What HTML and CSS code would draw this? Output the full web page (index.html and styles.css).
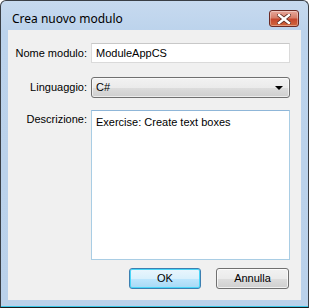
FILE: index.html
```html
<!DOCTYPE html>
<html lang="it">
<head>
    <meta charset="UTF-8">
    <title>Crea nuovo modulo</title>
    <link rel="stylesheet" href="styles.css">
</head>
<body>
    <div class="window">
        <!-- Title bar -->
        <div class="titlebar">
            <span class="title">Crea nuovo modulo</span>
            <div class="close-btn">
                <svg width="14" height="10" viewBox="0 0 14 10">
                    <path d="M2 1 L12 9 M12 1 L2 9" stroke="#5a2a20" stroke-width="4" stroke-linecap="square"/>
                    <path d="M2 1 L12 9 M12 1 L2 9" stroke="#ffffff" stroke-width="2.4" stroke-linecap="square"/>
                </svg>
            </div>
        </div>

        <!-- Dialog body -->
        <div class="client">
            <div class="row">
                <label class="label">Nome modulo:</label>
                <div class="textbox">ModuleAppCS</div>
            </div>
            <div class="row combo-row">
                <label class="label">Linguaggio:</label>
                <div class="combo">
                    <span>C#</span>
                    <span class="arrow"></span>
                </div>
            </div>
            <div class="row desc-row">
                <label class="label">Descrizione:</label>
                <div class="textarea">Exercise: Create text boxes</div>
            </div>
            <div class="buttons">
                <div class="btn btn-default">OK</div>
                <div class="btn">Annulla</div>
            </div>
        </div>
    </div>
</body>
</html>
```

FILE: styles.css
```css
* {
    margin: 0;
    padding: 0;
    box-sizing: border-box;
}

body {
    width: 309px;
    height: 308px;
    font-family: 'Liberation Sans', Arial, sans-serif;
    font-size: 11px;
    color: #000;
    background: #fff;
    overflow: hidden;
}

.window {
    width: 309px;
    height: 308px;
    border: 1px solid #3a3f46;
    border-bottom-color: #1a1a1a;
    border-radius: 6px 6px 0 0;
    background: linear-gradient(to bottom, #c7daef 0, #bcd3ec 30px, #bad1ea 100%);
    box-shadow: inset 0 -1px 0 #3ac6e6;
    display: flex;
    flex-direction: column;
}

.titlebar {
    height: 29px;
    display: flex;
    align-items: flex-start;
    justify-content: space-between;
    padding: 0 9px 0 11px;
}

.title {
    font-family: 'Noto Sans', 'Open Sans', sans-serif;
    font-size: 12px;
    line-height: 16px;
    margin-top: 10px;
    color: #000;
}

.close-btn {
    width: 30px;
    height: 17px;
    margin-top: 9px;
    border: 1px solid #6b2a24;
    border-radius: 3px;
    background: linear-gradient(to bottom, #e7a89c 0, #d77e6a 45%, #c5472e 55%, #d0673c 100%);
    box-shadow: inset 0 0 0 1px rgba(255, 255, 255, 0.35);
    display: flex;
    align-items: center;
    justify-content: center;
}

.client {
    width: 293px;
    height: 270px;
    margin-left: 7px;
    background: #f0f0f0;
    padding: 13px 11px 0 0;
    display: flex;
    flex-direction: column;
}

.row {
    display: flex;
    gap: 4px;
}

.label {
    width: 79px;
    flex-shrink: 0;
    text-align: right;
    line-height: 20px;
}

.textbox {
    width: 199px;
    height: 20px;
    background: #fff;
    border: 1px solid #dadada;
    border-top-color: #c8c8c8;
    padding: 0 4px;
    line-height: 18px;
}

.combo-row {
    margin-top: 14px;
}

.combo-row .label {
    line-height: 21px;
}

.combo {
    width: 199px;
    height: 21px;
    border: 1px solid #707070;
    border-radius: 3px;
    background: linear-gradient(to bottom, #f2f2f2 0, #ebebeb 50%, #dddddd 51%, #cfcfcf 100%);
    box-shadow: inset 0 0 0 1px rgba(255, 255, 255, 0.6);
    padding: 0 4px;
    line-height: 19px;
    display: flex;
    justify-content: space-between;
    align-items: center;
}

.arrow {
    width: 0;
    height: 0;
    border-left: 4px solid transparent;
    border-right: 4px solid transparent;
    border-top: 4px solid #000;
    margin-right: 2px;
}

.desc-row {
    margin-top: 12px;
}

.desc-row .label {
    line-height: 14px;
    padding-top: 2px;
}

.textarea {
    width: 199px;
    height: 150px;
    background: #fff;
    border: 1px solid #a9cde4;
    border-top-color: #8fb6d8;
    padding: 4px 4px;
    line-height: 14px;
}

.buttons {
    display: flex;
    justify-content: flex-end;
    gap: 15px;
    margin-top: 8px;
    padding-right: 1px;
}

.btn {
    width: 73px;
    height: 21px;
    border: 1px solid #707070;
    border-radius: 3px;
    background: linear-gradient(to bottom, #f2f2f2 0, #ebebeb 50%, #dddddd 51%, #cfcfcf 100%);
    box-shadow: inset 0 0 0 1px rgba(255, 255, 255, 0.7);
    text-align: center;
    line-height: 19px;
}

.btn-default {
    width: 72px;
    border-color: #3c7fb1;
    background: linear-gradient(to bottom, #eaf6fd 0, #d9f0fc 50%, #bee6fd 51%, #a7d9f5 100%);
    box-shadow: inset 0 0 0 1px #48d6f8;
}
```
